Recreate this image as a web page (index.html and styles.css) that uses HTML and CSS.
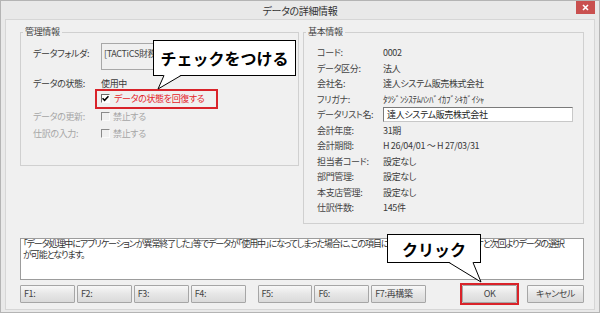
FILE: index.html
```html
<!DOCTYPE html>
<html lang="ja">
<head>
    <meta charset="UTF-8">
    <meta name="viewport" content="width=device-width, initial-scale=1.0">
    <title>データの詳細情報</title>
    <link rel="stylesheet" href="styles.css">
</head>
<body>
    <div class="window">
        <div class="titlebar">
            <span></span>
            <span class="title">データの詳細情報</span>
            <button class="close" aria-label="閉じる">
                <svg width="7" height="7" viewBox="0 0 7 7"><path d="M1 1L6 6M6 1L1 6" stroke="#fff" stroke-width="1.6"/></svg>
            </button>
        </div>

        <div class="client">
            <div class="groups">
                <fieldset class="group group-admin">
                    <legend>管理情報</legend>
                    <div class="admin-body">
                        <div class="row row-folder">
                            <span class="label">データフォルダ:</span>
                            <div class="readonly-box">[TACTiCS財務大将]</div>
                        </div>
                        <div class="row row-status">
                            <span class="label">データの状態:</span>
                            <span class="value">使用中</span>
                        </div>
                        <div class="row row-restore">
                            <span class="label"></span>
                            <label class="mark-red">
                                <span class="check checked">
                                    <svg width="7" height="7" viewBox="0 0 7 7"><path d="M0.5 3.2L2.6 5.3L6.5 1.2" fill="none" stroke="#000" stroke-width="1.6"/></svg>
                                </span>
                                <span class="restore-text">データの状態を回復する</span>
                            </label>
                        </div>
                        <div class="row row-update disabled">
                            <span class="label">データの更新:</span>
                            <span class="check"></span>
                            <span>禁止する</span>
                        </div>
                        <div class="row row-entry disabled">
                            <span class="label">仕訳の入力:</span>
                            <span class="check"></span>
                            <span>禁止する</span>
                        </div>
                    </div>
                </fieldset>

                <fieldset class="group group-basic">
                    <legend>基本情報</legend>
                    <div class="info-grid">
                        <span class="label">コード:</span><span>0002</span>
                        <span class="label">データ区分:</span><span>法人</span>
                        <span class="label">会社名:</span><span>達人システム販売株式会社</span>
                        <span class="label">フリガナ:</span><span>ﾀﾂｼﾞﾝｼｽﾃﾑﾊﾝﾊﾞｲｶﾌﾞｼｷｶﾞｲｼｬ</span>
                        <span class="label">データリスト名:</span><div class="edit-box">達人システム販売株式会社</div>
                        <span class="label">会計年度:</span><span>31期</span>
                        <span class="label">会計期間:</span><span>H 26/04/01 ～ H 27/03/31</span>
                        <span class="label">担当者コード:</span><span>設定なし</span>
                        <span class="label">部門管理:</span><span>設定なし</span>
                        <span class="label">本支店管理:</span><span>設定なし</span>
                        <span class="label">仕訳件数:</span><span>145件</span>
                    </div>
                </fieldset>
            </div>

            <div class="note">
                <div class="note-line">「データ処理中にアプリケーションが異常終了した」等でデータが「使用中」になってしまった場合に、この項目にチェックしてOKボタンを押すと次回よりデータの選択</div>
                <div class="note-line">が可能となります。</div>
            </div>

            <div class="buttons">
                <button class="fkey">F1:</button>
                <button class="fkey">F2:</button>
                <button class="fkey">F3:</button>
                <button class="fkey">F4:</button>
                <button class="fkey fkey-gap">F5:</button>
                <button class="fkey">F6:</button>
                <button class="fkey">F7:再構築</button>
                <span class="mark-ok"><button class="action">OK</button></span>
                <button class="action cancel">キャンセル</button>
            </div>
        </div>

        <!-- annotations -->
        <div class="callout callout-check">
            チェックをつける
            <svg class="tail" width="32" height="16" viewBox="0 0 32 16">
                <polygon points="11,0 28,0 5,14" fill="#fff"/>
                <polyline points="11,0.5 5,14 28,0.5" fill="none" stroke="#000" stroke-width="1"/>
            </svg>
        </div>
        <div class="callout callout-click">
            クリック
            <svg class="tail" width="100" height="22" viewBox="0 0 100 22">
                <polygon points="62,0 86,0 94,20" fill="#fff"/>
                <polyline points="62,0.5 94,20 86,0.5" fill="none" stroke="#000" stroke-width="1"/>
            </svg>
        </div>
    </div>
</body>
</html>
```

FILE: styles.css
```css
body {
    margin: 0;
    font-family: "Noto Sans CJK JP", sans-serif;
    font-size: 9px;
    letter-spacing: -0.35px;
    font-feature-settings: "palt";
    color: #3a3a3a;
}
button {
    font-family: inherit;
    font-size: inherit;
    letter-spacing: inherit;
    font-feature-settings: inherit;
}
.window {
    position: relative;
    width: 600px;
    height: 313px;
    box-sizing: border-box;
    border: 1px solid #b4b4b4;
    background: #e9e9e9;
    padding: 0 4px 2px;
    display: flex;
    flex-direction: column;
}
.titlebar {
    height: 18px;
    display: grid;
    grid-template-columns: 1fr auto 1fr;
    align-items: start;
}
.title {
    font-size: 10px;
    line-height: 19px;
    color: #333;
}
.close {
    justify-self: end;
    width: 19px;
    height: 13px;
    margin: 0;
    padding: 0;
    border: none;
    background: #c9504f;
    display: flex;
    align-items: center;
    justify-content: center;
}
.client {
    flex: 1;
    border: 1px solid #d6d6d6;
    background: #f0f0f0;
    padding: 5px 10px 0 14px;
}
.groups {
    display: flex;
    gap: 4px;
    height: 199px;
    align-items: flex-start;
}
.group {
    margin: 0;
    padding: 0;
    min-width: 0;
    box-sizing: border-box;
    border: 1px solid #d0d0d0;
}
.group legend {
    margin-left: 2px;
    padding: 0 2px;
    line-height: 14px;
    color: #444;
}
.group-admin {
    width: 279px;
    height: 141px;
}
.group-basic {
    width: 281px;
    height: 199px;
}
.admin-body {
    padding: 4px 0 0 12px;
}
.row {
    display: flex;
    align-items: center;
    height: 14px;
    white-space: nowrap;
}
.row .label {
    width: 68px;
    flex: none;
}
.row-folder {
    height: 27px;
    align-items: flex-start;
}
.row-folder .label {
    padding-top: 4px;
}
.readonly-box {
    width: 189px;
    height: 27px;
    box-sizing: border-box;
    border: 1px solid #a8a8a8;
    padding: 3px 2px 0;
    color: #444;
}
.row-status {
    margin-top: 6px;
}
.row-restore {
    height: 17px;
}
.row-update {
    margin-top: 2px;
}
.row-entry {
    margin-top: 3px;
}
.disabled {
    color: #a6a6a6;
}
.check {
    width: 9px;
    height: 9px;
    box-sizing: border-box;
    border: 1px solid;
    border-color: #8a8a8a #fafafa #fafafa #8a8a8a;
    margin-right: 3px;
    flex: none;
    display: flex;
    align-items: center;
    justify-content: center;
}
.check.checked {
    border-color: #6a6a6a #fff #fff #6a6a6a;
    background: #fff;
}
.mark-red {
    display: flex;
    align-items: center;
    height: 20px;
    box-sizing: border-box;
    width: 123px;
    margin-left: -6px;
    padding-left: 4px;
    border: 2px solid #d9232a;
}
.restore-text {
    color: #e5242b;
    margin-left: 1px;
}
.info-grid {
    display: grid;
    grid-template-columns: 66px 1fr;
    grid-auto-rows: 15.5px;
    align-items: center;
    padding: 6px 0 0 13px;
    white-space: nowrap;
}
.info-grid .label {
    color: #444;
}
.edit-box {
    width: 190px;
    height: 15px;
    box-sizing: border-box;
    border: 1px solid #8c8c8c;
    border-color: #7a7a7a #c8c8c8 #c8c8c8 #7a7a7a;
    background: #fff;
    padding: 0 3px;
    line-height: 13px;
    color: #222;
}
.note {
    margin-top: 14px;
    height: 42px;
    box-sizing: border-box;
    border: 1px solid #9c9c9c;
    background: #fff;
    padding: 0 2px;
    line-height: 10.5px;
    letter-spacing: -1.05px;
    color: #333;
    overflow: hidden;
}
.note-line {
    white-space: nowrap;
}
.buttons {
    display: flex;
    gap: 2px;
    margin-top: 5px;
    height: 18px;
}
.fkey, .action {
    width: 55px;
    height: 18px;
    margin: 0;
    border: 1px solid #a6a6a6;
    border-radius: 1px;
    background: linear-gradient(#f8f8f8, #e6e6e6 50%, #dadada);
    color: #444;
    padding: 0 3px;
    text-align: left;
    line-height: 16px;
    white-space: nowrap;
}
.fkey-gap {
    margin-left: 10px;
}
.action {
    text-align: center;
}
.mark-ok {
    display: flex;
    margin: -2px -2px -2px 32px;
    border: 2px solid #d9232a;
}
.cancel {
    width: 57px;
    margin-left: 8px;
}
.callout {
    position: absolute;
    box-sizing: border-box;
    border: 1px solid #000;
    background: #fff;
    color: #000;
    font-size: 16px;
    font-weight: 700;
    letter-spacing: 0;
    font-feature-settings: normal;
    display: flex;
    align-items: center;
    justify-content: center;
}
.callout .tail {
    position: absolute;
    left: -1px;
    top: 100%;
}
.callout-check {
    left: 152px;
    top: 39px;
    width: 143px;
    height: 36px;
}
.callout-click {
    left: 386px;
    top: 233px;
    width: 94px;
    height: 29px;
}
```
